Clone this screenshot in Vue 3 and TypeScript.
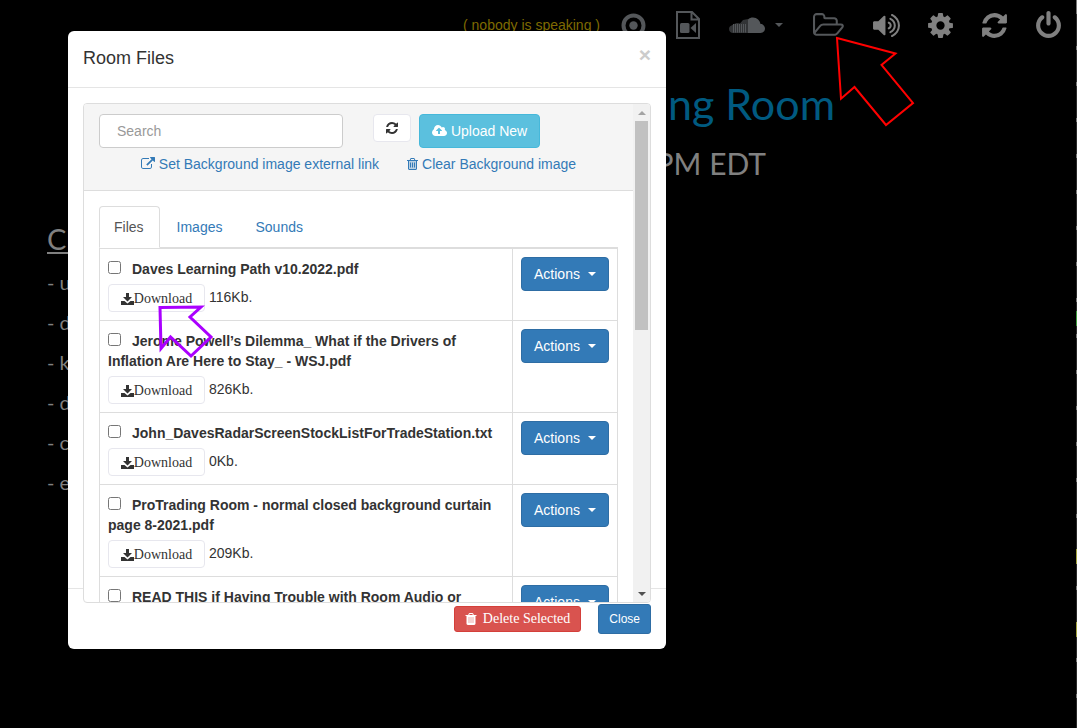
<script setup lang="ts">
import { ref } from 'vue'

interface RoomFile {
  name: string
  size: string
}

const files: RoomFile[] = [
  { name: 'Daves Learning Path v10.2022.pdf', size: '116Kb.' },
  { name: 'Jerome Powell’s Dilemma_ What if the Drivers of Inflation Are Here to Stay_ - WSJ.pdf', size: '826Kb.' },
  { name: 'John_DavesRadarScreenStockListForTradeStation.txt', size: '0Kb.' },
  { name: 'ProTrading Room - normal closed background curtain page 8-2021.pdf', size: '209Kb.' },
  { name: 'READ THIS if Having Trouble with Room Audio or', size: '' },
]

const tabs = ['Files', 'Images', 'Sounds']
const activeTab = ref('Files')
const search = ref('')
const selected = ref<string[]>([])
const notes = ['- u', '- d', '- k', '- d', '- c', '- e']
const cloudBars = [0, 1, 2, 3, 4, 5, 6]

const icons = {
  refresh:
    'M1639 1056q0 5-1 7-64 268-268 434.5t-478 166.5q-146 0-282.5-55t-243.5-157l-129 129q-19 19-45 19t-45-19-19-45v-448q0-26 19-45t45-19h448q26 0 45 19t19 45-19 45l-137 137q71 66 161 102t187 36q134 0 250-65t186-179q11-17 53-117 8-23 30-23h192q13 0 22.5 9.5t9.5 22.5zm25-800v448q0 26-19 45t-45 19h-448q-26 0-45-19t-19-45 19-45l138-138q-148-137-349-137-134 0-250 65t-186 179q-11 17-53 117-8 23-30 23h-199q-13 0-22.5-9.5t-9.5-22.5v-7q65-268 270-434.5t480-166.5q146 0 284 55.5t245 156.5l130-129q19-19 45-19t45 19 19 45z',
  cog:
    'M1152 896q0-106-75-181t-181-75-181 75-75 181 75 181 181 75 181-75 75-181zm512-109v222q0 12-8 23t-20 13l-185 28q-19 54-39 91 35 50 107 138 10 12 10 25t-9 23q-27 37-99 108t-94 71q-12 0-26-9l-138-108q-44 23-91 38-16 136-29 186-7 28-36 28h-222q-14 0-24.5-8.5t-11.5-21.5l-28-184q-49-16-90-37l-141 107q-10 9-25 9-14 0-25-11-126-114-165-168-7-10-7-23 0-12 8-23 15-21 51-66.5t54-70.5q-27-50-41-99l-183-27q-13-2-21-12.5t-8-23.5v-222q0-12 8-23t19-13l186-28q14-46 39-92-40-57-107-138-10-12-10-24 0-10 9-23 26-36 98.5-107.5t94.5-71.5q13 0 26 10l138 107q44-23 91-38 16-136 29-186 7-28 36-28h222q14 0 24.5 8.5t11.5 21.5l28 184q49 16 90 37l142-107q9-9 24-9 13 0 25 10 129 119 165 170 7 8 7 22 0 12-8 23-15 21-51 66.5t-54 70.5q26 50 41 98l183 28q13 2 21 12.5t8 23.5z',
  power:
    'M1664 896q0 156-61 298t-164 245-245 164-298 61-298-61-245-164-164-245-61-298q0-182 80.5-343t226.5-270q43-32 95.5-25t83.5 50q32 42 24.5 94.5t-49.5 84.5q-98 74-151.5 181t-53.5 228q0 104 40.5 198.5t109.5 163.5 163.5 109.5 198.5 40.5 198.5-40.5 163.5-109.5 109.5-163.5 40.5-198.5q0-121-53.5-228t-151.5-181q-42-32-49.5-84.5t24.5-94.5q31-43 84-50t95 25q146 109 226.5 270t80.5 343zm-640-768v640q0 52-38 90t-90 38-90-38-38-90v-640q0-52 38-90t90-38 90 38 38 90z',
  volume:
    'M832 352v1088q0 26-19 45t-45 19-45-19l-333-333h-262q-26 0-45-19t-19-45v-384q0-26 19-45t45-19h262l333-333q19-19 45-19t45 19 19 45zm384 544q0 76-42.5 141.5t-112.5 93.5q-10 5-25 5-26 0-45-18.5t-19-45.5q0-21 12-35.5t29-25 34-23 29-36 12-56.5-12-56.5-29-36-34-23-29-25-12-35.5q0-27 19-45.5t45-18.5q15 0 25 5 70 27 112.5 93t42.5 142zm256 0q0 153-85 282.5t-225 188.5q-13 5-25 5-27 0-46-19t-19-45q0-39 39-59 56-29 76-44 74-54 115.5-135.5t41.5-173.5-41.5-173.5-115.5-135.5q-20-15-76-44-39-20-39-59 0-26 19-45t45-19q13 0 26 5 140 59 225 188.5t85 282.5zm256 0q0 230-127 422.5t-338 283.5q-13 5-26 5-26 0-45-19t-19-45q0-36 39-59 7-4 22.5-10.5t22.5-10.5q46-25 82-51 123-91 192-227t69-289-69-289-192-227q-36-26-82-51-7-4-22.5-10.5t-22.5-10.5q-39-23-39-59 0-26 19-45t45-19q13 0 26 5 211 91 338 283.5t127 422.5z',
  folder:
    'M1717 931q0-35-53-35h-1088q-40 0-85.5 21.5t-71.5 52.5l-294 363q-18 24-18 40 0 35 53 35h1088q40 0 86-22t71-53l294-363q18-22 18-39zm-1141-163h768v-160q0-40-28-68t-68-28h-576q-40 0-68-28t-28-68v-64q0-40-28-68t-68-28h-320q-40 0-68 28t-28 68v853l256-315q44-53 116-87.5t140-34.5zm1269 163q0 62-46 120l-295 363q-43 53-116 87.5t-140 34.5h-1088q-92 0-158-66t-66-158v-960q0-92 66-158t158-66h320q92 0 158 66t66 158v32h544q92 0 158 66t66 158v160h192q54 0 99 24.5t67 70.5q15 32 15 68z',
  upload:
    'M1216 864q0-14-9-23l-352-352q-9-9-23-9t-23 9l-351 351q-10 12-10 24 0 14 9 23t23 9h224v352q0 13 9.5 22.5t22.5 9.5h192q13 0 22.5-9.5t9.5-22.5v-352h224q13 0 22.5-9.5t9.5-22.5zm640 288q0 159-112.5 271.5t-271.5 112.5h-1088q-185 0-316.5-131.5t-131.5-316.5q0-130 70-240t188-165q-2-30-2-43 0-212 150-362t362-150q156 0 285.5 87t188.5 231q71-62 166-62 106 0 181 75t75 181q0 76-41 138 130 31 213.5 135.5t83.5 238.5z',
  external:
    'M1408 928v320q0 119-84.5 203.5t-203.5 84.5h-832q-119 0-203.5-84.5t-84.5-203.5v-832q0-119 84.5-203.5t203.5-84.5h704q14 0 23 9t9 23v64q0 14-9 23t-23 9h-704q-66 0-113 47t-47 113v832q0 66 47 113t113 47h832q66 0 113-47t47-113v-320q0-14 9-23t23-9h64q14 0 23 9t9 23zm384-864v512q0 26-19 45t-45 19-45-19l-176-176-652 652q-10 10-23 10t-23-10l-114-114q-10-10-10-23t10-23l652-652-176-176q-19-19-19-45t19-45 45-19h512q26 0 45 19t19 45z',
  trashOutline:
    'M704 736v576q0 14-9 23t-23 9h-64q-14 0-23-9t-9-23v-576q0-14 9-23t23-9h64q14 0 23 9t9 23zm256 0v576q0 14-9 23t-23 9h-64q-14 0-23-9t-9-23v-576q0-14 9-23t23-9h64q14 0 23 9t9 23zm256 0v576q0 14-9 23t-23 9h-64q-14 0-23-9t-9-23v-576q0-14 9-23t23-9h64q14 0 23 9t9 23zm128 724v-948h-896v948q0 22 7 40.5t14.5 27 10.5 8.5h832q3 0 10.5-8.5t14.5-27 7-40.5zm-672-1076h448l-48-117q-7-9-17-11h-317q-10 2-17 11zm928 32v64q0 14-9 23t-23 9h-96v948q0 83-47 143.5t-113 60.5h-832q-66 0-113-58.5t-47-141.5v-952h-96q-14 0-23-9t-9-23v-64q0-14 9-23t23-9h309l70-167q15-37 54-63t79-26h320q40 0 79 26t54 63l70 167h309q14 0 23 9t9 23z',
  trash:
    'M704 1376v-704q0-14-9-23t-23-9h-64q-14 0-23 9t-9 23v704q0 14 9 23t23 9h64q14 0 23-9t9-23zm256 0v-704q0-14-9-23t-23-9h-64q-14 0-23 9t-9 23v704q0 14 9 23t23 9h64q14 0 23-9t9-23zm256 0v-704q0-14-9-23t-23-9h-64q-14 0-23 9t-9 23v704q0 14 9 23t23 9h64q14 0 23-9t9-23zm-544-992h448l-48-117q-7-9-17-11h-317q-10 2-17 11zm928 32v64q0 14-9 23t-23 9h-96v948q0 83-47 143.5t-113 60.5h-832q-66 0-113-58.5t-47-141.5v-952h-96q-14 0-23-9t-9-23v-64q0-14 9-23t23-9h309l70-167q15-37 54-63t79-26h320q40 0 79 26t54 63l70 167h309q14 0 23 9t9 23z',
}
</script>

<template>
  <div class="room">
    <header class="toolbar">
      <span class="speaker">( nobody is speaking )</span>
      <button class="tool dim" type="button" aria-label="Record">
        <svg class="icon-lg" viewBox="0 0 29 29">
          <circle cx="14.500" cy="14.500" r="10" fill="none" stroke="currentColor" stroke-width="4" />
          <circle cx="14.500" cy="14.500" r="4.200" fill="currentColor" />
        </svg>
      </button>
      <button class="tool dim video" type="button" aria-label="Video file">
        <svg class="icon-page" viewBox="0 0 24 28">
          <path d="M1 1h15l7 7v19H1zM15.500 1v7.500H23" fill="none" stroke="currentColor" stroke-width="2" />
          <rect x="4" y="12" width="9.500" height="10" rx="1.500" fill="currentColor" />
          <path d="M20 12v10l-5.500-5z" fill="currentColor" />
        </svg>
      </button>
      <button class="tool dim cloud" type="button" aria-label="Music">
        <svg class="icon-cloud" viewBox="0 0 36 17">
          <path d="M19 16V2.500C20.500 1 22 .5 24 .5c4 0 7 3 7.500 6.500C34 6.700 36 9 36 11.500S34 16 31.500 16z" fill="currentColor" />
          <path d="M0 12c0-2 1-3 2.500-3.500L5 7l3-1 3 .500L14 3l5-1v14H4c-2 0-4-1.500-4-4z" fill="currentColor" opacity=".6" />
          <path v-for="bar in cloudBars" :key="bar" :d="`M${4.5 + bar * 2} 7v8.500`" stroke="currentColor" stroke-width="1" />
        </svg>
        <i class="caret"></i>
      </button>
      <button class="tool dim folder" type="button" aria-label="Room files">
        <svg class="icon-folder" viewBox="-64 0 1920 1792"><path :d="icons.folder" fill="currentColor" /></svg>
      </button>
      <button class="tool" type="button" aria-label="Volume">
        <svg class="icon-lg" viewBox="0 0 1792 1792"><path :d="icons.volume" fill="currentColor" /></svg>
      </button>
      <button class="tool" type="button" aria-label="Settings">
        <svg class="icon-lg" viewBox="0 0 1792 1792"><path :d="icons.cog" fill="currentColor" /></svg>
      </button>
      <button class="tool" type="button" aria-label="Reload">
        <svg class="icon-lg" viewBox="0 0 1792 1792"><path :d="icons.refresh" fill="currentColor" /></svg>
      </button>
      <button class="tool" type="button" aria-label="Leave">
        <svg class="icon-lg" viewBox="0 0 1792 1792"><path :d="icons.power" fill="currentColor" /></svg>
      </button>
    </header>

    <main class="stage">
      <h1>Trading Room</h1>
      <p class="hours">PM EDT</p>
      <h2>Cl</h2>
      <ul class="notes">
        <li v-for="(note, i) in notes" :key="i">{{ note }}</li>
      </ul>
    </main>
    <div class="edge"></div>

    <section class="modal" role="dialog" aria-labelledby="modal-title">
      <div class="modal-header">
        <h4 id="modal-title">Room Files</h4>
        <button class="close" type="button" aria-label="Dismiss">×</button>
      </div>

      <div class="modal-body">
        <div class="panel">
          <div class="panel-scroll">
            <div class="panel-heading">
              <div class="controls">
                <input v-model="search" class="search" type="text" placeholder="Search" aria-label="Search" />
                <button class="plain reload" type="button" aria-label="Refresh list">
                  <svg class="icon" viewBox="0 0 1792 1792"><path :d="icons.refresh" fill="currentColor" /></svg>
                </button>
                <button class="upload" type="button">
                  <svg class="icon-wide" viewBox="-64 0 1920 1792"><path :d="icons.upload" fill="currentColor" /></svg>
                  Upload New
                </button>
              </div>
              <div class="links">
                <a href="#">
                  <svg class="icon" viewBox="0 0 1792 1792"><path :d="icons.external" fill="currentColor" /></svg>
                  Set Background image external link
                </a>
                <a href="#">
                  <svg class="icon-slim" viewBox="192 0 1408 1792">
                    <path d="M448 512h896v1024H448z" fill="currentColor" opacity=".3" />
                    <path :d="icons.trashOutline" fill="currentColor" />
                  </svg>
                  Clear Background image
                </a>
              </div>
            </div>

            <div class="panel-body">
              <nav class="tabs">
                <a
                  v-for="tab in tabs"
                  :key="tab"
                  href="#"
                  :class="{ active: tab === activeTab }"
                  @click.prevent="activeTab = tab"
                >{{ tab }}</a>
              </nav>
              <table class="files">
                <tbody>
                  <tr v-for="file in files" :key="file.name">
                    <td>
                      <label class="name">
                        <input v-model="selected" type="checkbox" :value="file.name" />{{ file.name }}
                      </label>
                      <div v-if="file.size" class="meta">
                        <button class="plain download" type="button">
                          <svg class="icon-save" viewBox="0 0 13 14">
                            <path d="M5 1h3v4h3L6.500 9.500 2 5h3z" fill="currentColor" />
                            <path d="M0 9h3.500l3 2.500 3-2.500H13v4H0z" fill="currentColor" />
                          </svg>Download
                        </button>
                        <span class="size">{{ file.size }}</span>
                      </div>
                    </td>
                    <td class="action-cell">
                      <button class="actions" type="button">Actions <i class="caret"></i></button>
                    </td>
                  </tr>
                </tbody>
              </table>
            </div>
          </div>
          <div class="scrollbar">
            <i class="arrow up"></i>
            <div class="track"><div class="thumb"></div></div>
            <i class="arrow down"></i>
          </div>
        </div>
      </div>

      <div class="modal-footer">
        <button class="delete" type="button">
          <svg class="icon" viewBox="0 0 1792 1792">
            <path d="M512 600h768v850H512z" fill="currentColor" opacity=".5" />
            <path :d="icons.trash" fill="currentColor" />
          </svg>
          Delete Selected
        </button>
        <button class="dismiss" type="button">Close</button>
      </div>
    </section>

    <svg class="pointer red" viewBox="0 0 80 92" aria-hidden="true">
      <path d="M2 3L60.500 18.500 46.500 30 78 68 51 90 19.500 52 6 63.700z" />
    </svg>
    <svg class="pointer purple" viewBox="0 0 60 60" aria-hidden="true">
      <path d="M5 7.500L46 7 35 17 56 37 36 56 15.500 37 6 48.500z" />
    </svg>
  </div>
</template>

<style>
body {
  margin: 0;
  background: #000;
}
</style>

<style scoped>
* {
  box-sizing: border-box;
}

.room {
  position: relative;
  height: 100vh;
  overflow: hidden;
  background: #000;
  font: 14px/20px "Liberation Sans", Arial, sans-serif;
  color: #333;
}

button {
  margin: 0;
  padding: 0;
  border: 0;
  background: none;
  color: inherit;
  font: inherit;
  cursor: pointer;
}

a {
  color: #337ab7;
  text-decoration: none;
}

svg {
  display: block;
  flex: none;
}

.toolbar {
  display: flex;
  align-items: center;
  justify-content: flex-end;
  height: 50px;
  padding-right: 14px;
  gap: 25px;
}

.speaker {
  margin-right: -6px;
  color: #7f6a00;
}

.tool {
  display: flex;
  align-items: center;
  color: #808080;
}

.dim {
  color: #54575a;
}

.video {
  padding: 0 4px 0 3px;
}

.cloud {
  gap: 10px;
  padding-right: 2px;
}

.folder {
  padding: 0 3px;
}

.icon-lg {
  width: 29px;
  height: 29px;
}

.icon-page {
  width: 24px;
  height: 28px;
}

.icon-cloud {
  width: 36px;
  height: 17px;
}

.icon-folder {
  width: 31px;
  height: 29px;
}

.icon {
  width: 14px;
  height: 14px;
}

.icon-wide {
  width: 15px;
  height: 14px;
}

.icon-slim {
  width: 11px;
  height: 14px;
}

.icon-save {
  width: 13px;
  height: 14px;
}

.caret {
  width: 0;
  height: 0;
  border: 4px solid transparent;
  border-top-color: currentColor;
  border-bottom: 0;
}

.stage {
  padding: 29px 0 0 47px;
  font-family: Lato, "Open Sans", sans-serif;
  color: #808080;
}

.stage h1,
.stage .hours {
  margin: 0;
  text-align: right;
}

.stage h1 {
  padding-right: 242px;
  color: #005a80;
  font-size: 43px;
  font-weight: 400;
  line-height: 50px;
}

.stage .hours {
  margin-top: 14px;
  padding-right: 311px;
  font-size: 30px;
  line-height: 40px;
}

.stage h2 {
  margin: 36px 0 0;
  font-size: 29px;
  font-weight: 400;
  line-height: 40px;
  text-decoration: underline;
}

.notes {
  margin: 3px 0 0;
  padding: 0;
  list-style: none;
  font-size: 20px;
  line-height: 40px;
}

.edge {
  position: absolute;
  top: 0;
  right: 0;
  bottom: 0;
  width: 1px;
  background:
    linear-gradient(#777, #777) 0 0 / 1px 14px no-repeat,
    linear-gradient(#3c9a3c, #3c9a3c) 0 311px / 1px 15px no-repeat,
    linear-gradient(#a0a03c, #a0a03c) 0 549px / 1px 15px no-repeat,
    linear-gradient(#a0a03c, #a0a03c) 0 622px / 1px 15px no-repeat,
    repeating-linear-gradient(#2a2a2a 0 10px, #777 10px 14px, #2a2a2a 14px 36px);
}

.modal {
  position: absolute;
  top: 31px;
  left: 68px;
  width: calc(100% - 479px);
  min-width: 560px;
  border-radius: 6px;
  background: #fff;
}

.modal-header {
  display: flex;
  justify-content: space-between;
  padding: 15px 15px 16px;
  border-bottom: 1px solid #e5e5e5;
}

.modal-header h4 {
  margin: 0;
  font-size: 18px;
  font-weight: 400;
  line-height: 25px;
}

.close {
  align-self: flex-start;
  color: #ccc;
  font-size: 21px;
  font-weight: 700;
  line-height: 18px;
}

.modal-body {
  padding: 15px 15px 0;
}

.panel {
  position: relative;
  display: flex;
  height: calc(100vh - 228px);
  margin-bottom: -15px;
  overflow: hidden;
  border: 1px solid #ddd;
  border-radius: 4px;
  background: #fff;
}

.panel-scroll {
  flex: 1;
  min-width: 0;
  overflow: hidden;
}

.panel-heading {
  padding: 10px 15px 16px;
  border-bottom: 1px solid #ddd;
  background: #f5f5f5;
}

.controls {
  display: flex;
  align-items: flex-start;
}

.search {
  width: 47%;
  height: 34px;
  padding: 6px 17px;
  border: 1px solid #ccc;
  border-radius: 4px;
  background: #fff;
  color: #555;
  font: inherit;
}

.search::placeholder {
  color: #999;
}

.plain {
  display: flex;
  align-items: center;
  justify-content: center;
  height: 28px;
  border: 1px solid #e7e7ee;
  border-radius: 4px;
  background: #fff;
}

.reload {
  width: 38px;
  margin: 0 8px 0 30px;
}

.upload {
  display: flex;
  align-items: center;
  gap: 4px;
  height: 34px;
  padding: 0 12px;
  border: 1px solid #46b8da;
  border-radius: 4px;
  background: #5bc0de;
  color: #fff;
}

.links {
  display: flex;
  justify-content: center;
  gap: 28px;
  margin-top: 6px;
}

.links a {
  display: flex;
  align-items: center;
  gap: 4px;
}

.panel-body {
  padding: 15px;
}

.tabs {
  display: flex;
  gap: 2px;
  border-bottom: 1px solid #ddd;
}

.tabs a {
  margin-bottom: -1px;
  padding: 10px 15px 10px 14px;
  border: 1px solid transparent;
  border-radius: 4px 4px 0 0;
}

.tabs .active {
  border-color: #ddd;
  border-bottom-color: #fff;
  background: #fff;
  color: #555;
}

.files {
  width: 100%;
  border-collapse: collapse;
}

.files td {
  padding: 10px 8px 8px;
  border: 1px solid #ddd;
  vertical-align: top;
}

.files .action-cell {
  width: 105px;
  padding-top: 8px;
}

.name {
  display: block;
  font-weight: 700;
}

.name input {
  width: 13px;
  height: 13px;
  margin: 0 11px 0 0;
  vertical-align: 0;
}

.meta {
  display: flex;
  gap: 4px;
  margin-top: 5px;
}

.size {
  line-height: 26px;
}

.download {
  width: 97px;
  padding-top: 1px;
  font-family: "Liberation Serif", "Times New Roman", serif;
}

.actions {
  display: flex;
  align-items: center;
  justify-content: center;
  gap: 8px;
  width: 88px;
  height: 34px;
  border: 1px solid #2e6da4;
  border-radius: 4px;
  background: #337ab7;
  color: #fff;
}

.scrollbar {
  display: flex;
  flex: none;
  flex-direction: column;
  align-items: center;
  width: 17px;
  background: #f1f1f1;
}

.arrow {
  width: 0;
  height: 0;
  margin: 7px 0 6px;
  border: 4px solid transparent;
}

.up {
  border-top: 0;
  border-bottom-color: #a3a3a3;
}

.down {
  border-bottom: 0;
  border-top-color: #505050;
}

.track {
  flex: 1;
  width: 13px;
}

.thumb {
  height: 45%;
  background: #c1c1c1;
}

.modal-footer {
  display: flex;
  align-items: center;
  justify-content: flex-end;
  gap: 17px;
  padding: 15px;
  border-top: 1px solid #e5e5e5;
  color: #fff;
}

.delete {
  display: flex;
  align-items: center;
  gap: 5px;
  height: 26px;
  padding: 0 10px 0 9px;
  border: 1px solid #d43f3a;
  border-radius: 3px;
  background: #d9534f;
  font-family: "Liberation Serif", "Times New Roman", serif;
}

.dismiss {
  height: 30px;
  padding: 0 10px;
  border: 1px solid #2e6da4;
  border-radius: 3px;
  background: #337ab7;
  font-size: 12px;
}

.pointer {
  position: absolute;
  fill: none;
  pointer-events: none;
}

.red {
  top: 35px;
  left: 835px;
  width: 80px;
  height: 92px;
  stroke: #f00;
  stroke-width: 2px;
}

.purple {
  top: 300px;
  left: 155px;
  width: 60px;
  height: 60px;
  stroke: #aa00ff;
  stroke-width: 3px;
}
</style>
